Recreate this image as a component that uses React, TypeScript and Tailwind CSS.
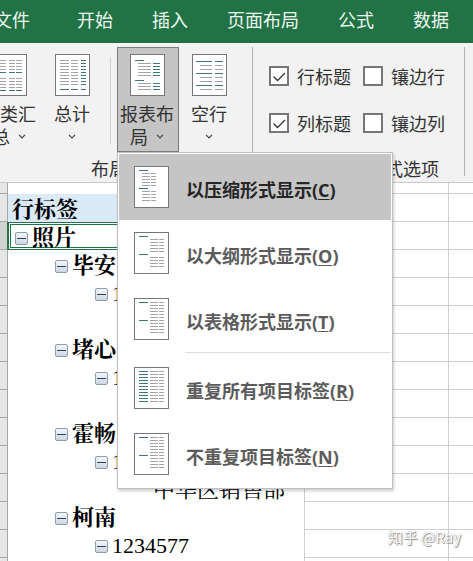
import React, { useState } from "react";

type Line = [x: number, y: number, w: number, color: string];

const BLUE = "#3f7480";
const GREEN = "#2f8060";
const GRAY = "#a3a3a3";

const range = (from: number, to: number, step = 3) => {
  const out: number[] = [];
  for (let i = from; i <= to; i += step) out.push(i);
  return out;
};

const cols = (ys: number[], xs: [number, number][], color: string): Line[] =>
  ys.flatMap((y) => xs.map(([x, w]): Line => [x, y, w, color]));

const upper = range(7, 19);
const lower = range(25, 34);
const all = range(4, 34);

const ICONS: Record<string, Line[]> = {
  subtotal: [
    ...cols([6, 9, 12, 15, 24, 27, 30, 33], [[6, 8], [17, 6], [24, 6]], GRAY),
    ...cols([18, 36], [[6, 8], [17, 6], [24, 6]], BLUE),
  ],
  grand: [
    ...cols(range(6, 30), [[5, 9], [16, 7]], GRAY),
    ...cols(range(6, 30), [[26, 5]], BLUE),
    ...cols([35], [[5, 9], [16, 7], [26, 5]], BLUE),
  ],
  layout: [
    ...cols([6, 26], [[5, 9]], BLUE),
    ...cols([9, 12, 15, 18, 21, 29, 32, 35], [[8, 13]], GRAY),
    ...cols([9, 12, 15, 18, 21, 29, 32, 35], [[23, 7]], BLUE),
  ],
  blank: [
    ...cols([7, 19, 31], [[4, 16], [23, 8]], BLUE),
    ...cols([11, 15, 23, 27, 35], [[8, 12], [23, 8]], GRAY),
  ],
  compact: [
    ...cols([4, 22], [[5, 9]], BLUE),
    ...cols([...upper, ...lower], [[8, 8], [17, 5]], GRAY),
  ],
  outline: [
    ...cols([4, 22], [[5, 9]], GREEN),
    ...cols([...upper, ...lower], [[16, 8], [25, 5]], GRAY),
  ],
  tabular: [
    ...cols([4, 22], [[5, 9]], GREEN),
    ...cols(all, [[16, 8], [25, 5]], GRAY),
  ],
  repeat: [
    ...cols(all, [[5, 9]], BLUE),
    ...cols(all, [[16, 8], [25, 5]], GRAY),
  ],
  noRepeat: [
    ...cols([4, 22], [[5, 9]], BLUE),
    ...cols(all, [[16, 8], [25, 5]], GRAY),
  ],
};

function SheetIcon({ name }: { name: string }) {
  return (
    <svg width="35" height="42" viewBox="0 0 35 42" className="shrink-0" aria-hidden="true">
      <rect x="0.5" y="0.5" width="34" height="41" fill="#fff" stroke="#777" />
      {ICONS[name].map(([x, y, w, color], i) => (
        <rect key={i} x={x} y={y} width={w} height="1" fill={color} />
      ))}
    </svg>
  );
}

function Chevron() {
  return (
    <svg width="8" height="5" viewBox="0 0 8 5" fill="none" stroke="#444" strokeWidth="1.2" aria-hidden="true">
      <path d="M1 0.8 4 3.8 7 0.8" />
    </svg>
  );
}

function RibbonButton({ icon, label, tail, active, className = "", onClick }: {
  icon: string; label: string; tail?: string; active?: boolean; className?: string; onClick?: () => void;
}) {
  return (
    <button
      onClick={onClick}
      className={`flex h-[105px] w-[62px] shrink-0 flex-col items-center border pt-1.5 pr-0.5 text-[18px] leading-[23px] ${active ? "border-[#7d7d7d] bg-[#c5c5c5]" : "border-transparent"} ${className}`}
    >
      <SheetIcon name={icon} />
      <span className="mt-1.5 whitespace-nowrap">{label}</span>
      <span className="flex h-[23px] items-center gap-2">
        {tail}
        <Chevron />
      </span>
    </button>
  );
}

function Check({ label, defaultChecked }: { label: string; defaultChecked?: boolean }) {
  return (
    <label className="flex items-center gap-2 whitespace-nowrap text-[18px] leading-5">
      <span className="relative size-5">
        <input
          type="checkbox"
          defaultChecked={defaultChecked}
          className="peer block size-5 appearance-none border-2 border-[#777] bg-white"
        />
        <svg
          viewBox="0 0 20 20"
          className="pointer-events-none absolute inset-0 hidden size-5 peer-checked:block"
          fill="none"
          stroke="#333"
          strokeWidth="1.3"
        >
          <path d="M4.5 10.5 8.5 14.5 16 7" />
        </svg>
      </span>
      {label}
    </label>
  );
}

const MENU = [
  { icon: "compact", text: "以压缩形式显示", accel: "C" },
  { icon: "outline", text: "以大纲形式显示", accel: "O" },
  { icon: "tabular", text: "以表格形式显示", accel: "T" },
  { icon: "repeat", text: "重复所有项目标签", accel: "R" },
  { icon: "noRepeat", text: "不重复项目标签", accel: "N" },
];

function LayoutMenu() {
  return (
    <div className="absolute top-[105px] left-0 z-10 w-[276px] border border-[#c0c0c0] bg-white p-px shadow-[1px_2px_3px_rgba(0,0,0,0.2)]">
      {MENU.map((item, i) => (
        <React.Fragment key={item.accel}>
          {i === 3 && <div className="mb-0.5 ml-[66px] h-px bg-[#dcdcdc]" />}
          <button
            className={`flex h-[66px] w-full items-center gap-[17px] pl-[15px] text-left font-['Open_Sans','Noto_Sans_CJK_SC',sans-serif] text-[18px] leading-6 font-bold whitespace-nowrap ${i === 0 ? "bg-[#c5c5c5] text-[#262626]" : "text-[#5c5c5c]"}`}
          >
            <SheetIcon name={item.icon} />
            <span className="pt-1.5">
              {item.text}(<span className="underline decoration-1 underline-offset-2">{item.accel}</span>)
            </span>
          </button>
        </React.Fragment>
      ))}
    </div>
  );
}

type Row = { text?: string; level?: 0 | 1 | 2 | 3; kind?: "head" | "selected" | "leaf" };

const ROWS: Row[] = [
  { text: "行标签", kind: "head" },
  { text: "照片", level: 0, kind: "selected" },
  { text: "毕安", level: 1 },
  { text: "1234574", level: 2 },
  {},
  { text: "堵心", level: 1 },
  { text: "1234575", level: 2 },
  {},
  { text: "霍畅", level: 1 },
  { text: "1234576", level: 2 },
  { text: "中华区销售部", level: 3, kind: "leaf" },
  { text: "柯南", level: 1 },
  { text: "1234577", level: 2 },
  {},
];

const INDENT = ["pl-[4px]", "pl-[47px]", "pl-[87px]", "pl-[145px]"];

function LabelCell({ row }: { row: Row }) {
  const { text, level = 0, kind } = row;
  if (!text) return null;
  if (kind === "head") {
    return <div className="flex h-7 items-center bg-[#dbeaf7] pt-1 pl-1 font-bold">{text}</div>;
  }
  return (
    <div
      className={`flex h-7 items-center gap-1 pt-1 whitespace-nowrap ${INDENT[level]} ${level < 2 ? "font-bold" : ""} ${kind === "selected" ? "border-[3px] border-double border-[#217346]" : ""}`}
    >
      {kind !== "leaf" && (
        <button
          aria-label={`折叠 ${text}`}
          className="flex size-[13px] shrink-0 items-center justify-center rounded-[2px] border border-[#8f9db0] bg-gradient-to-b from-[#f4f7fa] to-[#ccd6e2]"
        >
          <span className="h-px w-[9px] bg-[#33435c]" />
        </button>
      )}
      <span>{text}</span>
    </div>
  );
}

function Sheet() {
  return (
    <table className="w-full table-fixed border-separate border-spacing-0 font-['Liberation_Serif','Noto_Serif_CJK_SC','Noto_Sans_CJK_SC',serif] text-[22px] leading-[22px] text-black">
      <colgroup>
        <col className="w-2" />
        <col className="w-[297px]" />
        <col className="w-36" />
        <col />
      </colgroup>
      <tbody>
        <tr className="h-[11px]">
          <td className="border-r border-b border-[#a6a6a6] bg-[#e6e6e6] p-0" />
          <td className="border-r border-[#d0d0d0] p-0" />
          <td className="border-r border-b border-[#d0d0d0] p-0" />
          <td className="border-b border-[#d0d0d0] p-0" />
        </tr>
        {ROWS.map((row, i) => (
          <tr key={i} className="h-7">
            <td
              className={`border-r border-b p-0 ${row.kind === "selected" ? "border-r-[#217346] border-b-[#a6a6a6] bg-[#d2d2d2]" : "border-[#a6a6a6] bg-[#e6e6e6]"}`}
            />
            <td className="border-r border-[#d0d0d0] p-0">
              <LabelCell row={row} />
            </td>
            <td className="border-r border-b border-[#d0d0d0] p-0" />
            <td className="border-b border-[#d0d0d0] p-0" />
          </tr>
        ))}
      </tbody>
    </table>
  );
}

export default function App() {
  const [open, setOpen] = useState(true);

  return (
    <div className="relative h-screen overflow-hidden bg-white font-['Noto_Sans_CJK_SC',sans-serif] text-[#333]">
      {/* Tabs */}
      <nav className="flex h-[43px] items-center gap-[39px] bg-[#217346] pb-1 text-[18px] whitespace-nowrap text-[#eef6f0]">
        <a href="#file" className="mr-2 -ml-1.5">文件</a>
        <a href="#home">开始</a>
        <a href="#insert">插入</a>
        <a href="#page">页面布局</a>
        <a href="#formula">公式</a>
        <a href="#data">数据</a>
      </nav>

      {/* Ribbon */}
      <div className="flex h-[140px] border-b border-[#c8c8c8] bg-[#f2f2f2] pt-1">
        <section className="flex w-[252px] shrink-0 flex-col">
          <div className="flex">
            <RibbonButton icon="subtotal" label="分类汇" tail="总" className="-ml-[21px]" />
            <RibbonButton icon="grand" label="总计" className="ml-px" />
            <div className="mx-1.5 mt-2.5 h-[87px] w-px bg-[#d0d0d0]" />
            <div className="relative">
              <RibbonButton icon="layout" label="报表布" tail="局" active onClick={() => setOpen(!open)} />
              {open && <LayoutMenu />}
            </div>
            <RibbonButton icon="blank" label="空行" />
          </div>
          <h2 className="pt-1 pl-[91px] text-[18px] leading-6">布局</h2>
        </section>
        <section className="mb-1.5 w-[213px] shrink-0 border-x border-[#b4b4b4] pl-4">
          <div className="grid h-[105px] grid-cols-[82px_82px] content-start gap-x-3 gap-y-[27px] pt-[19px]">
            <Check label="行标题" defaultChecked />
            <Check label="镶边行" />
            <Check label="列标题" defaultChecked />
            <Check label="镶边列" />
          </div>
          <h2 className="pt-1 pl-2 text-[18px] leading-6 whitespace-nowrap">数据透视表样式选项</h2>
        </section>
      </div>

      <Sheet />

      <span className="absolute right-3 bottom-3 text-[15px] leading-6 text-white [text-shadow:1px_1px_1px_#888,0_0_1px_#999]">
        知乎 @Ray
      </span>
    </div>
  );
}
